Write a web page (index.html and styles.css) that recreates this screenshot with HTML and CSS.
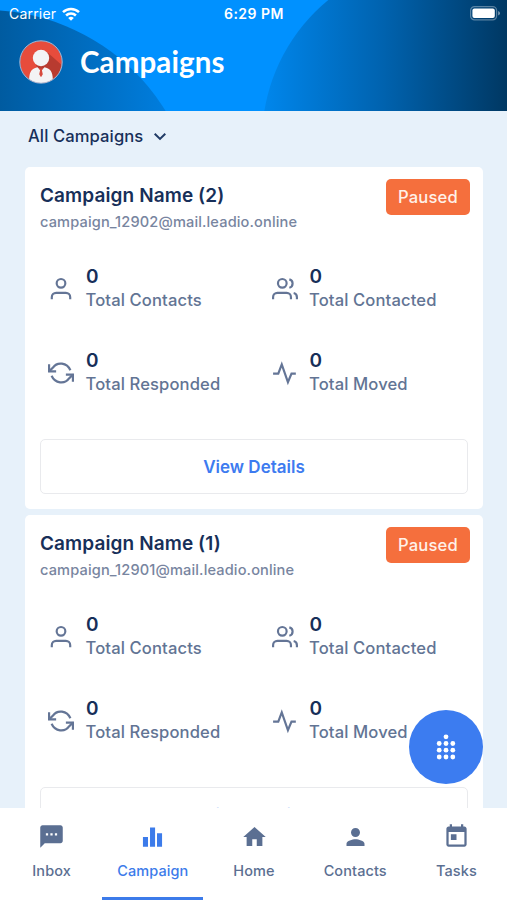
FILE: index.html
```html
<!DOCTYPE html>
<html lang="en">
<head>
<meta charset="utf-8">
<meta name="viewport" content="width=device-width, initial-scale=1">
<title>Campaigns</title>
<link rel="stylesheet" href="styles.css">
</head>
<body>
<svg width="0" height="0" class="defs" aria-hidden="true">
  <symbol id="user" viewBox="0 0 24 24"><circle cx="12" cy="6.800" r="4"/><path d="M20.500 21.500v-2a4 4 0 0 0-4-4h-9a4 4 0 0 0-4 4v2"/></symbol>
  <symbol id="users" viewBox="0 0 24 24"><path d="M17.500 21.500v-2a4 4 0 0 0-4-4H5a4 4 0 0 0-4 4v2"/><circle cx="9.500" cy="6.800" r="4"/><path d="M23 21.500v-2a4 4 0 0 0-3-3.870M16 3.130a4 4 0 0 1 0 7.750"/></symbol>
  <symbol id="refresh" viewBox="0 0 24 24"><path d="M1 4v6.500h6.500M23 20v-6.500h-6.500"/><path d="M20.700 9.500C17.500 2.300 8.500 1.300 4.600 7L1 10.500M23 13.500 19.400 17C15.500 22.700 6.500 21.700 3.300 14.500"/></symbol>
  <symbol id="activity" viewBox="0 0 24 24"><path d="M22 12.500h-4L14.700 20.500L9 4l-3.200 8.500H1"/></symbol>
</svg>
<div class="app">
  <header class="header">
    <svg class="header-art" viewBox="0 0 507 111" aria-hidden="true">
      <defs>
        <linearGradient id="gl" gradientUnits="userSpaceOnUse" x1="0" y1="0" x2="165" y2="0"><stop offset="0" stop-color="#005ba0"/><stop offset="1" stop-color="#007ddd"/></linearGradient>
        <linearGradient id="gr" gradientUnits="userSpaceOnUse" x1="262" y1="0" x2="507" y2="0"><stop offset="0" stop-color="#0087ed"/><stop offset=".5" stop-color="#0062ae"/><stop offset="1" stop-color="#003863"/></linearGradient>
      </defs>
      <circle cx="-15" cy="222" r="212" fill="url(#gl)"/>
      <circle cx="443" cy="140" r="181" fill="url(#gr)"/>
    </svg>
    <div class="status">
      <span class="carrier">Carrier
        <svg width="18" height="14" viewBox="0 0 18 14"><g fill="none" stroke="#fff" stroke-width="2.500"><path d="M1 5.200a11.500 11.500 0 0 1 16 0"/><path d="M4.100 8.500a7 7 0 0 1 9.800 0"/></g><path d="M9 13.800 6.200 11a4 4 0 0 1 5.600 0z" fill="#fff"/></svg>
      </span>
      <span class="time">6:29 PM</span>
      <svg class="battery" width="31" height="15" viewBox="0 0 31 15"><rect x=".6" y=".6" width="26" height="13.300" rx="4" fill="none" stroke="#fff" stroke-opacity=".35" stroke-width="1.200"/><rect x="2.400" y="2.500" width="22.400" height="9.500" rx="2" fill="#fff"/><path d="M28.200 5v4.600q1.800-.8 1.800-2.300T28.200 5z" fill="#fff" fill-opacity=".5"/></svg>
    </div>
    <div class="title-row">
      <svg class="avatar" width="44" height="44" viewBox="0 0 44 44"><defs><clipPath id="av"><circle cx="22" cy="22" r="21"/></clipPath></defs><g clip-path="url(#av)"><path fill="#e74c3c" d="M0 0h44v44H0z"/><path fill="#b83b30" d="m28 12 16 14v18H26L17 25z"/><path fill="#f3f3f5" d="M10 44c0-11 1-15 8.500-16.700L22 31l3.500-3.700C33 29 34 33 34 44z"/><circle cx="22" cy="18" r="8.200" fill="#f3f3f5"/><path fill="#d7493d" d="m19.800 27.800 2.200 1 2.200-1-1.300 2.400.9 4-1.800 3-1.800-3 .9-4z"/></g><circle cx="22" cy="22" r="21.200" fill="none" stroke="#a9b9d5" stroke-width="1"/></svg>
      <h1>Campaigns</h1>
    </div>
  </header>

  <main class="content">
    <div class="filter"><span>All Campaigns</span><svg width="14" height="9" viewBox="0 0 14 9"><path d="m1.700 1.700 5.300 5.200 5.300-5.200" fill="none" stroke="#213b66" stroke-width="2"/></svg></div>

    <article class="card">
      <div class="card-head">
        <div><h2>Campaign Name (2)</h2><p class="mail">campaign_12902@mail.leadio.online</p></div>
        <span class="badge">Paused</span>
      </div>
      <div class="stats">
        <div class="stat"><svg class="icon"><use href="#user"/></svg><div><b>0</b><span>Total Contacts</span></div></div>
        <div class="stat"><svg class="icon"><use href="#users"/></svg><div><b>0</b><span>Total Contacted</span></div></div>
        <div class="stat"><svg class="icon"><use href="#refresh"/></svg><div><b>0</b><span>Total Responded</span></div></div>
        <div class="stat"><svg class="icon"><use href="#activity"/></svg><div><b>0</b><span>Total Moved</span></div></div>
      </div>
      <button class="details">View Details</button>
    </article>

    <article class="card">
      <div class="card-head">
        <div><h2>Campaign Name (1)</h2><p class="mail">campaign_12901@mail.leadio.online</p></div>
        <span class="badge">Paused</span>
      </div>
      <div class="stats">
        <div class="stat"><svg class="icon"><use href="#user"/></svg><div><b>0</b><span>Total Contacts</span></div></div>
        <div class="stat"><svg class="icon"><use href="#users"/></svg><div><b>0</b><span>Total Contacted</span></div></div>
        <div class="stat"><svg class="icon"><use href="#refresh"/></svg><div><b>0</b><span>Total Responded</span></div></div>
        <div class="stat"><svg class="icon"><use href="#activity"/></svg><div><b>0</b><span>Total Moved</span></div></div>
      </div>
      <button class="details">View Details</button>
    </article>

    <button class="fab" aria-label="Dialpad">
      <svg width="20" height="26" viewBox="0 0 20 26" fill="#fff"><circle cx="10" cy="2.800" r="2.400"/><circle cx="3.200" cy="9.500" r="2.400"/><circle cx="10" cy="9.500" r="2.400"/><circle cx="16.800" cy="9.500" r="2.400"/><circle cx="3.200" cy="16.200" r="2.400"/><circle cx="10" cy="16.200" r="2.400"/><circle cx="16.800" cy="16.200" r="2.400"/><circle cx="3.200" cy="23" r="2.400"/><circle cx="10" cy="23" r="2.400"/><circle cx="16.800" cy="23" r="2.400"/></svg>
    </button>
  </main>

  <nav class="tabs">
    <a class="tab"><svg viewBox="0 0 24 24"><path d="M20 2H4c-1.100 0-2 .9-2 2v18l4-4h14c1.100 0 2-.9 2-2V4c0-1.100-.9-2-2-2zM9 11H7V9h2v2zm4 0h-2V9h2v2zm4 0h-2V9h2v2z"/></svg><span>Inbox</span></a>
    <a class="tab active"><svg viewBox="0 0 24 24"><path d="M3.500 12.500h4.500V21H3.500zM9.800 4h4.500v17H9.800zM16 9h4.500v12H16z"/></svg><span>Campaign</span></a>
    <a class="tab"><svg viewBox="0 0 24 24"><path d="M10 20.500v-6h4v6h5v-8h3l-10-9-10 9h3v8z"/></svg><span>Home</span></a>
    <a class="tab"><svg viewBox="0 0 24 24"><path d="M12 12.500c2.210 0 4-1.790 4-4s-1.790-4-4-4-4 1.790-4 4 1.790 4 4 4zm0 2c-2.670 0-8 1.340-8 4v2h16v-2c0-2.660-5.330-4-8-4z"/></svg><span>Contacts</span></a>
    <a class="tab"><svg viewBox="0 0 24 24"><path d="M19 3h-1V1h-2v2H8V1H6v2H5c-1.110 0-1.990.9-1.990 2L3 19c0 1.100.89 2 2 2h14c1.100 0 2-.9 2-2V5c0-1.100-.9-2-2-2zm0 16H5V8h14v11zM7 10h5v5H7z"/></svg><span>Tasks</span></a>
  </nav>
</div>
</body>
</html>
```
FILE: styles.css
```css
* { box-sizing: border-box; }
body { margin: 0; font-family: Inter, "Liberation Sans", sans-serif; color: #172f59; }
h1, h2, p { margin: 0; }
button { font: inherit; cursor: pointer; }
.defs { position: absolute; }
.app { width: 507px; height: 900px; display: flex; flex-direction: column; overflow: hidden; background: #e7f1fa; }

.header { position: relative; flex: none; height: 111px; background: #0091ff; color: #fff; overflow: hidden; }
.header-art { position: absolute; inset: 0; width: 507px; height: 111px; }
.status { position: relative; display: grid; grid-template-columns: 1fr auto 1fr; align-items: center; height: 27px; padding: 0 6px 0 9px; font-size: 14px; line-height: 20px; }
.carrier { display: flex; align-items: center; gap: 6px; letter-spacing: .2px; }
.time { font-weight: 600; letter-spacing: .5px; margin-left: -2px; }
.battery { justify-self: end; }
.title-row { position: relative; display: flex; align-items: center; gap: 17px; padding: 13px 0 0 19px; }
.title-row h1 { font: 700 29.5px/40px Lato, sans-serif; letter-spacing: .1px; }

.content { position: relative; flex: 1; min-height: 0; overflow: hidden; padding: 0 24px 0 25px; }
.filter { display: flex; align-items: center; gap: 10px; height: 50px; padding: 0 0 0 3px; margin-bottom: 6px; font-size: 16.6px; font-weight: 500; letter-spacing: .1px; }
.card { height: 342px; margin-bottom: 6px; padding: 12px 13px 15px 15px; border-radius: 5px; background: #fff; display: flex; flex-direction: column; }
.card-head { display: flex; justify-content: space-between; align-items: flex-start; }
.card h2 { font-size: 19px; line-height: 24px; font-weight: 600; padding-top: 5px; letter-spacing: .1px; }
.mail { margin-top: 5px; font-size: 14.6px; line-height: 18px; font-weight: 500; color: #7885a0; letter-spacing: .13px; }
.badge { width: 84px; height: 36px; border-radius: 5px; background: #f56f3d; color: #fff1e8; font-size: 16.6px; line-height: 36px; font-weight: 500; text-align: center; letter-spacing: .15px; }
.stats { display: grid; grid-template-columns: 223.5px 1fr; grid-auto-rows: 84px; margin-top: 32px; }
.stat { display: flex; gap: 12px; padding-left: 8px; }
.stat b, .stat span { display: block; line-height: 25px; }
.stat b { font-size: 19px; font-weight: 600; padding-top: 1px; margin-bottom: -1px; }
.stat span { font-size: 16.6px; color: #627494; font-weight: 500; letter-spacing: .12px; margin-left: -.5px; }
.icon { width: 26px; height: 26px; margin-top: 13px; fill: none; stroke: #647596; stroke-width: 2; }
.details { height: 55px; margin: auto 2px 0 0; border: 1px solid #e9eaed; border-radius: 5px; background: #fff; color: #3d7bf0; font-size: 17px; font-weight: 600; flex: none; }
.fab { position: absolute; right: 24px; bottom: 24px; width: 74px; height: 74px; padding: 0; border: 0; border-radius: 50%; background: #3c7cf0; display: grid; place-items: center; }

.tabs { flex: none; height: 92px; display: flex; background: #fff; padding-left: 1px; }
.tab { position: relative; flex: 1; display: flex; flex-direction: column; align-items: center; padding-top: 15px; color: #5b6f92; font-size: 14.5px; line-height: 20px; font-weight: 500; letter-spacing: .1px; }
.tab svg { width: 27px; height: 27px; margin-bottom: 11px; fill: currentColor; }
.tab.active { color: #3c7bea; }
.tab.active::after { content: ""; position: absolute; left: 0; right: 0; bottom: 0; height: 3px; background: currentColor; }
```
